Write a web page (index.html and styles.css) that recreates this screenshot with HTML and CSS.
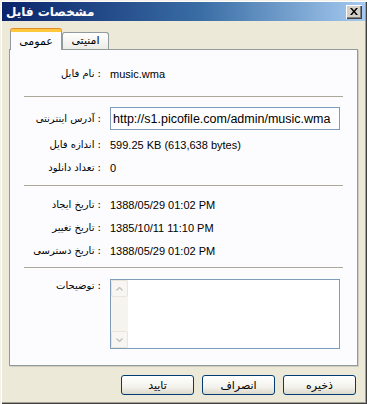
FILE: index.html
```html
<!DOCTYPE html>
<html lang="fa">
<head>
    <meta charset="UTF-8">
    <title>مشخصات فایل</title>
    <link rel="stylesheet" href="styles.css">
</head>
<body>
    <!-- پنجره مشخصات فایل -->
    <div class="window">
        <div class="titlebar">
            <span class="title">مشخصات فایل</span>
            <span class="close">
                <svg width="8" height="7" viewBox="0 0 8 7">
                    <path d="M0 0h2l2 2.5 2-2.5h2L5 3.5 8 7H6L4 4.5 2 7H0l3-3.5z" fill="#000"/>
                </svg>
            </span>
        </div>

        <div class="tabs">
            <div class="tab active">عمومی</div>
            <div class="tab">امنیتی</div>
        </div>

        <div class="panel">
            <div class="row first">
                <div class="label">نام فایل :</div>
                <div class="value">music.wma</div>
            </div>

            <div class="sep sep1"></div>

            <div class="row input-row">
                <div class="label">آدرس اینترنتی :</div>
                <input class="url" type="text" value="http://s1.picofile.com/admin/music.wma">
            </div>
            <div class="row size-row">
                <div class="label">اندازه فایل :</div>
                <div class="value">599.25 KB (613,638 bytes)</div>
            </div>
            <div class="row">
                <div class="label">تعداد دانلود :</div>
                <div class="value">0</div>
            </div>

            <div class="sep sep2"></div>

            <div class="row dates">
                <div class="label">تاریخ ایجاد :</div>
                <div class="value">1388/05/29 01:02 PM</div>
            </div>
            <div class="row">
                <div class="label">تاریخ تغییر :</div>
                <div class="value">1385/10/11 11:10 PM</div>
            </div>
            <div class="row">
                <div class="label">تاریخ دسترسی :</div>
                <div class="value">1388/05/29 01:02 PM</div>
            </div>

            <div class="sep sep3"></div>

            <div class="row notes-row">
                <div class="label">توضیحات :</div>
                <div class="notes">
                    <div class="scrollbar">
                        <div class="arrow">
                            <svg width="7" height="4" viewBox="0 0 7 4"><path d="M0.5 3.5L3.5 0.5 6.5 3.5" stroke="#c3c2b6" stroke-width="1.4" fill="none"/></svg>
                        </div>
                        <div class="track"></div>
                        <div class="arrow">
                            <svg width="7" height="4" viewBox="0 0 7 4"><path d="M0.5 0.5L3.5 3.5 6.5 0.5" stroke="#c3c2b6" stroke-width="1.4" fill="none"/></svg>
                        </div>
                    </div>
                </div>
            </div>
        </div>

        <div class="buttons">
            <button type="button">تایید</button>
            <button type="button">انصراف</button>
            <button type="button">ذخیره</button>
        </div>
    </div>
</body>
</html>
```

FILE: styles.css
```css
/* پایه صفحه */
body {
    margin: 0;
    background: #ece9d8;
    font-family: "Liberation Sans", "DejaVu Sans", sans-serif;
    font-size: 11px;
    color: #000;
}
/* قاب پنجره */
.window {
    width: 367px;
    height: 404px;
    box-sizing: border-box;
    padding: 2px;
    background: #ece9d8;
    box-shadow: inset 1px 1px #f4f2e8, inset 2px 2px #fff, inset -1px -1px #404040, inset -2px -2px #a29f90;
}
/* نوار عنوان */
.titlebar {
    height: 19px;
    display: flex;
    align-items: center;
    justify-content: space-between;
    padding: 0 3px 0 4px;
    background: linear-gradient(to right, #0a246a, #3a6ea5 55%, #a6caf0);
}
.title {
    color: #fff;
    font-family: "DejaVu Sans", sans-serif;
    font-weight: bold;
    font-size: 12px;
}
.close {
    width: 16px;
    height: 14px;
    box-sizing: border-box;
    display: flex;
    align-items: center;
    justify-content: center;
    background: #d4d0c8;
    box-shadow: inset 1px 1px #fff, inset -1px -1px #404040, inset -2px -2px #808080;
}
/* زبانه ها */
.tabs {
    display: flex;
    align-items: flex-end;
    height: 20px;
    margin: 8px 0 0 7px;
    position: relative;
    z-index: 1;
}
.tab {
    box-sizing: border-box;
    height: 17px;
    padding: 0 10px;
    line-height: 16px;
    border: 1px solid #919b9c;
    border-bottom: none;
    border-radius: 3px 3px 0 0;
    background: linear-gradient(#fff, #ecebe6);
    font-family: "DejaVu Sans", sans-serif;
}
.tab.active {
    width: 52px;
    height: 21px;
    margin-bottom: -1px;
    margin-left: 1px;
    padding: 0;
    text-align: center;
    line-height: 19px;
    background: #fcfcfe;
    border-top: 3px solid #ffc83c;
    box-shadow: 0 -1px #e68b2c;
}
.tab:not(.active) {
    width: 47px;
    padding: 0;
    text-align: center;
}
/* محتوای زبانه */
.panel {
    width: 349px;
    height: 317px;
    margin-left: 7px;
    box-sizing: border-box;
    border: 1px solid #919b9c;
    background: #fcfcfe;
    box-shadow: 1px 1px #d0cdbf;
}
.row {
    display: flex;
    align-items: center;
    height: 23px;
}
.label {
    width: 91px;
    flex: none;
    text-align: right;
    margin-right: 9px;
    font-family: "DejaVu Sans", sans-serif;
    font-size: 10px;
}
.value {
    white-space: nowrap;
}
.row.first {
    margin-top: 12px;
}
.sep {
    height: 1px;
    margin: 0 14px;
    background: #aca899;
}
.sep1 { margin-top: 11px; }
.sep2 { margin-top: 6px; }
.sep3 { margin-top: 5px; }
.input-row { margin-top: 10px; }
.size-row { margin-top: 3px; }
.dates { margin-top: 7px; }
/* فیلد آدرس */
.url {
    width: 230px;
    height: 23px;
    box-sizing: border-box;
    margin: 0;
    padding: 0 2px;
    border: 1px solid #7f9db9;
    font-family: "Liberation Sans", sans-serif;
    font-size: 12.5px;
    color: #000;
}
/* توضیحات */
.notes-row {
    height: 70px;
    align-items: flex-start;
    margin-top: 11px;
}
.notes-row .label {
    line-height: 14px;
}
.notes {
    width: 230px;
    height: 70px;
    box-sizing: border-box;
    border: 1px solid #7f9db9;
    background: #fff;
    display: flex;
}
.scrollbar {
    width: 17px;
    display: flex;
    flex-direction: column;
    background: #f5f4ef;
}
.arrow {
    height: 17px;
    box-sizing: border-box;
    border: 1px solid #e8e6dc;
    border-radius: 2px;
    background: #f7f6f2;
    display: flex;
    align-items: center;
    justify-content: center;
}
.track {
    flex: 1;
}
/* دکمه ها */
.buttons {
    display: flex;
    justify-content: flex-end;
    gap: 8px;
    margin: 9px 9px 0 0;
}
button {
    width: 73px;
    height: 20px;
    padding: 0;
    border: 1px solid #003c74;
    border-radius: 3px;
    background: linear-gradient(#fff, #f3f2ec 60%, #dcd8cb);
    font-family: "DejaVu Sans", sans-serif;
    font-size: 11px;
    color: #000;
}
```
